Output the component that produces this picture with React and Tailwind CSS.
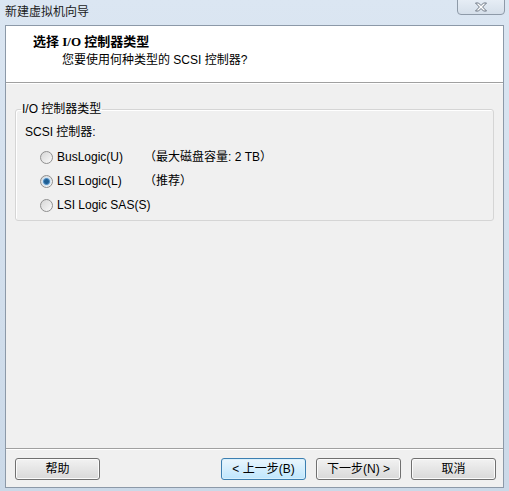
import React from 'react';

const ui = { fontFamily: '"Liberation Sans", "Noto Sans CJK SC", sans-serif' };

function Radio({ checked }) {
  return (
    <span className="w-[13px] h-[13px] rounded-full border border-[#8f8f8f] bg-gradient-to-br from-[#d6d6d6] to-[#fafafa] flex items-center justify-center shrink-0">
      {checked && (
        <span className="w-[7px] h-[7px] rounded-full bg-[#1f5e93] border border-[#4a8cc4] shadow-[0_0_0_1px_#cfe3f3]" />
      )}
    </span>
  );
}

function Button({ children, primary }) {
  return (
    <button
      className={`w-[85px] h-[22px] rounded-[3px] border text-[12px] text-black flex items-center justify-center whitespace-nowrap ${
        primary
          ? 'border-[#3c7fb1] bg-gradient-to-b from-[#eaf6fd] to-[#bee6fd] shadow-[inset_0_0_0_1px_#d9f0fc]'
          : 'border-[#707070] bg-gradient-to-b from-[#f2f2f2] to-[#d9d9d9] shadow-[inset_0_0_0_1px_#fbfbfb]'
      }`}
    >
      {children}
    </button>
  );
}

function Option({ checked, label, note }) {
  return (
    <div className="h-[24px] flex items-center pl-[24px] whitespace-nowrap">
      <Radio checked={checked} />
      <span className="ml-[4px] w-[87px] shrink-0">{label}</span>
      {note && <span>{note}</span>}
    </div>
  );
}

export default function App() {
  return (
    <div
      className="w-[509px] h-[491px] bg-gradient-to-b from-[#dbe6f2] to-[#cbd9e8] flex flex-col text-[12px] text-black overflow-hidden"
      style={ui}
    >
      {/* title bar */}
      <div className="h-[25px] flex justify-between items-start shrink-0">
        <span className="pl-[5px] pt-[4px] leading-[16px] text-[#1a1a1a]">新建虚拟机向导</span>
        <div className="w-[48px] h-[16px] mr-[4px] -mt-px rounded-b-[4px] border border-[#8e9aa8] bg-gradient-to-b from-[#e6edf5] to-[#d5dfea] flex items-center justify-center">
          <svg width="14" height="10" viewBox="0 0 14 10">
            <path
              d="M1.5 1 L4.5 1 L7 3.5 L9.5 1 L12.5 1 L8.6 5 L12.5 9 L9.5 9 L7 6.5 L4.5 9 L1.5 9 L5.4 5 Z"
              fill="#fff"
              stroke="#6d7784"
              strokeWidth="1"
              strokeLinejoin="round"
            />
          </svg>
        </div>
      </div>

      {/* client area */}
      <div className="mx-[5px] mb-[3px] flex-1 border border-[#8c99a8] bg-[#f0f0f0] flex flex-col">
        <div className="h-[57px] bg-white border-b border-[#a0a0a0] shadow-[0_1px_0_#ffffff] pl-[27px] pt-[8px] shrink-0">
          <div
            className="font-bold leading-[16px]"
            style={{ fontFamily: '"Liberation Serif", "Noto Sans CJK SC", serif', fontSize: '13px' }}
          >
            选择 I/O 控制器类型
          </div>
          <div className="pl-[29px] pt-[2px] leading-[16px]">您要使用何种类型的 SCSI 控制器?</div>
        </div>

        <fieldset className="mt-[18px] ml-[9px] mr-[9px] border border-[#d5d5d5] rounded-[3px] shadow-[inset_1px_1px_0_#ffffff] pb-[3px]">
          <legend className="ml-[5px] px-[1px] leading-[16px]">I/O 控制器类型</legend>
          <div className="pl-[9px] pt-[7px] leading-[16px]">SCSI 控制器:</div>
          <div className="mt-[5px]">
            <Option label="BusLogic(U)" note="（最大磁盘容量: 2 TB）" />
            <Option checked label="LSI Logic(L)" note="（推荐）" />
            <Option label="LSI Logic SAS(S)" />
          </div>
        </fieldset>

        <div className="flex-1" />

        <div className="border-t border-[#a0a0a0] shadow-[inset_0_1px_0_#ffffff] pt-[9px] pb-[7px] pl-[9px] pr-[7px] flex items-center">
          <Button>帮助</Button>
          <div className="flex-1" />
          <div className="flex gap-[10px]">
            <Button primary>&lt; 上一步(B)</Button>
            <Button>下一步(N) &gt;</Button>
            <Button>取消</Button>
          </div>
        </div>
      </div>
    </div>
  );
}
